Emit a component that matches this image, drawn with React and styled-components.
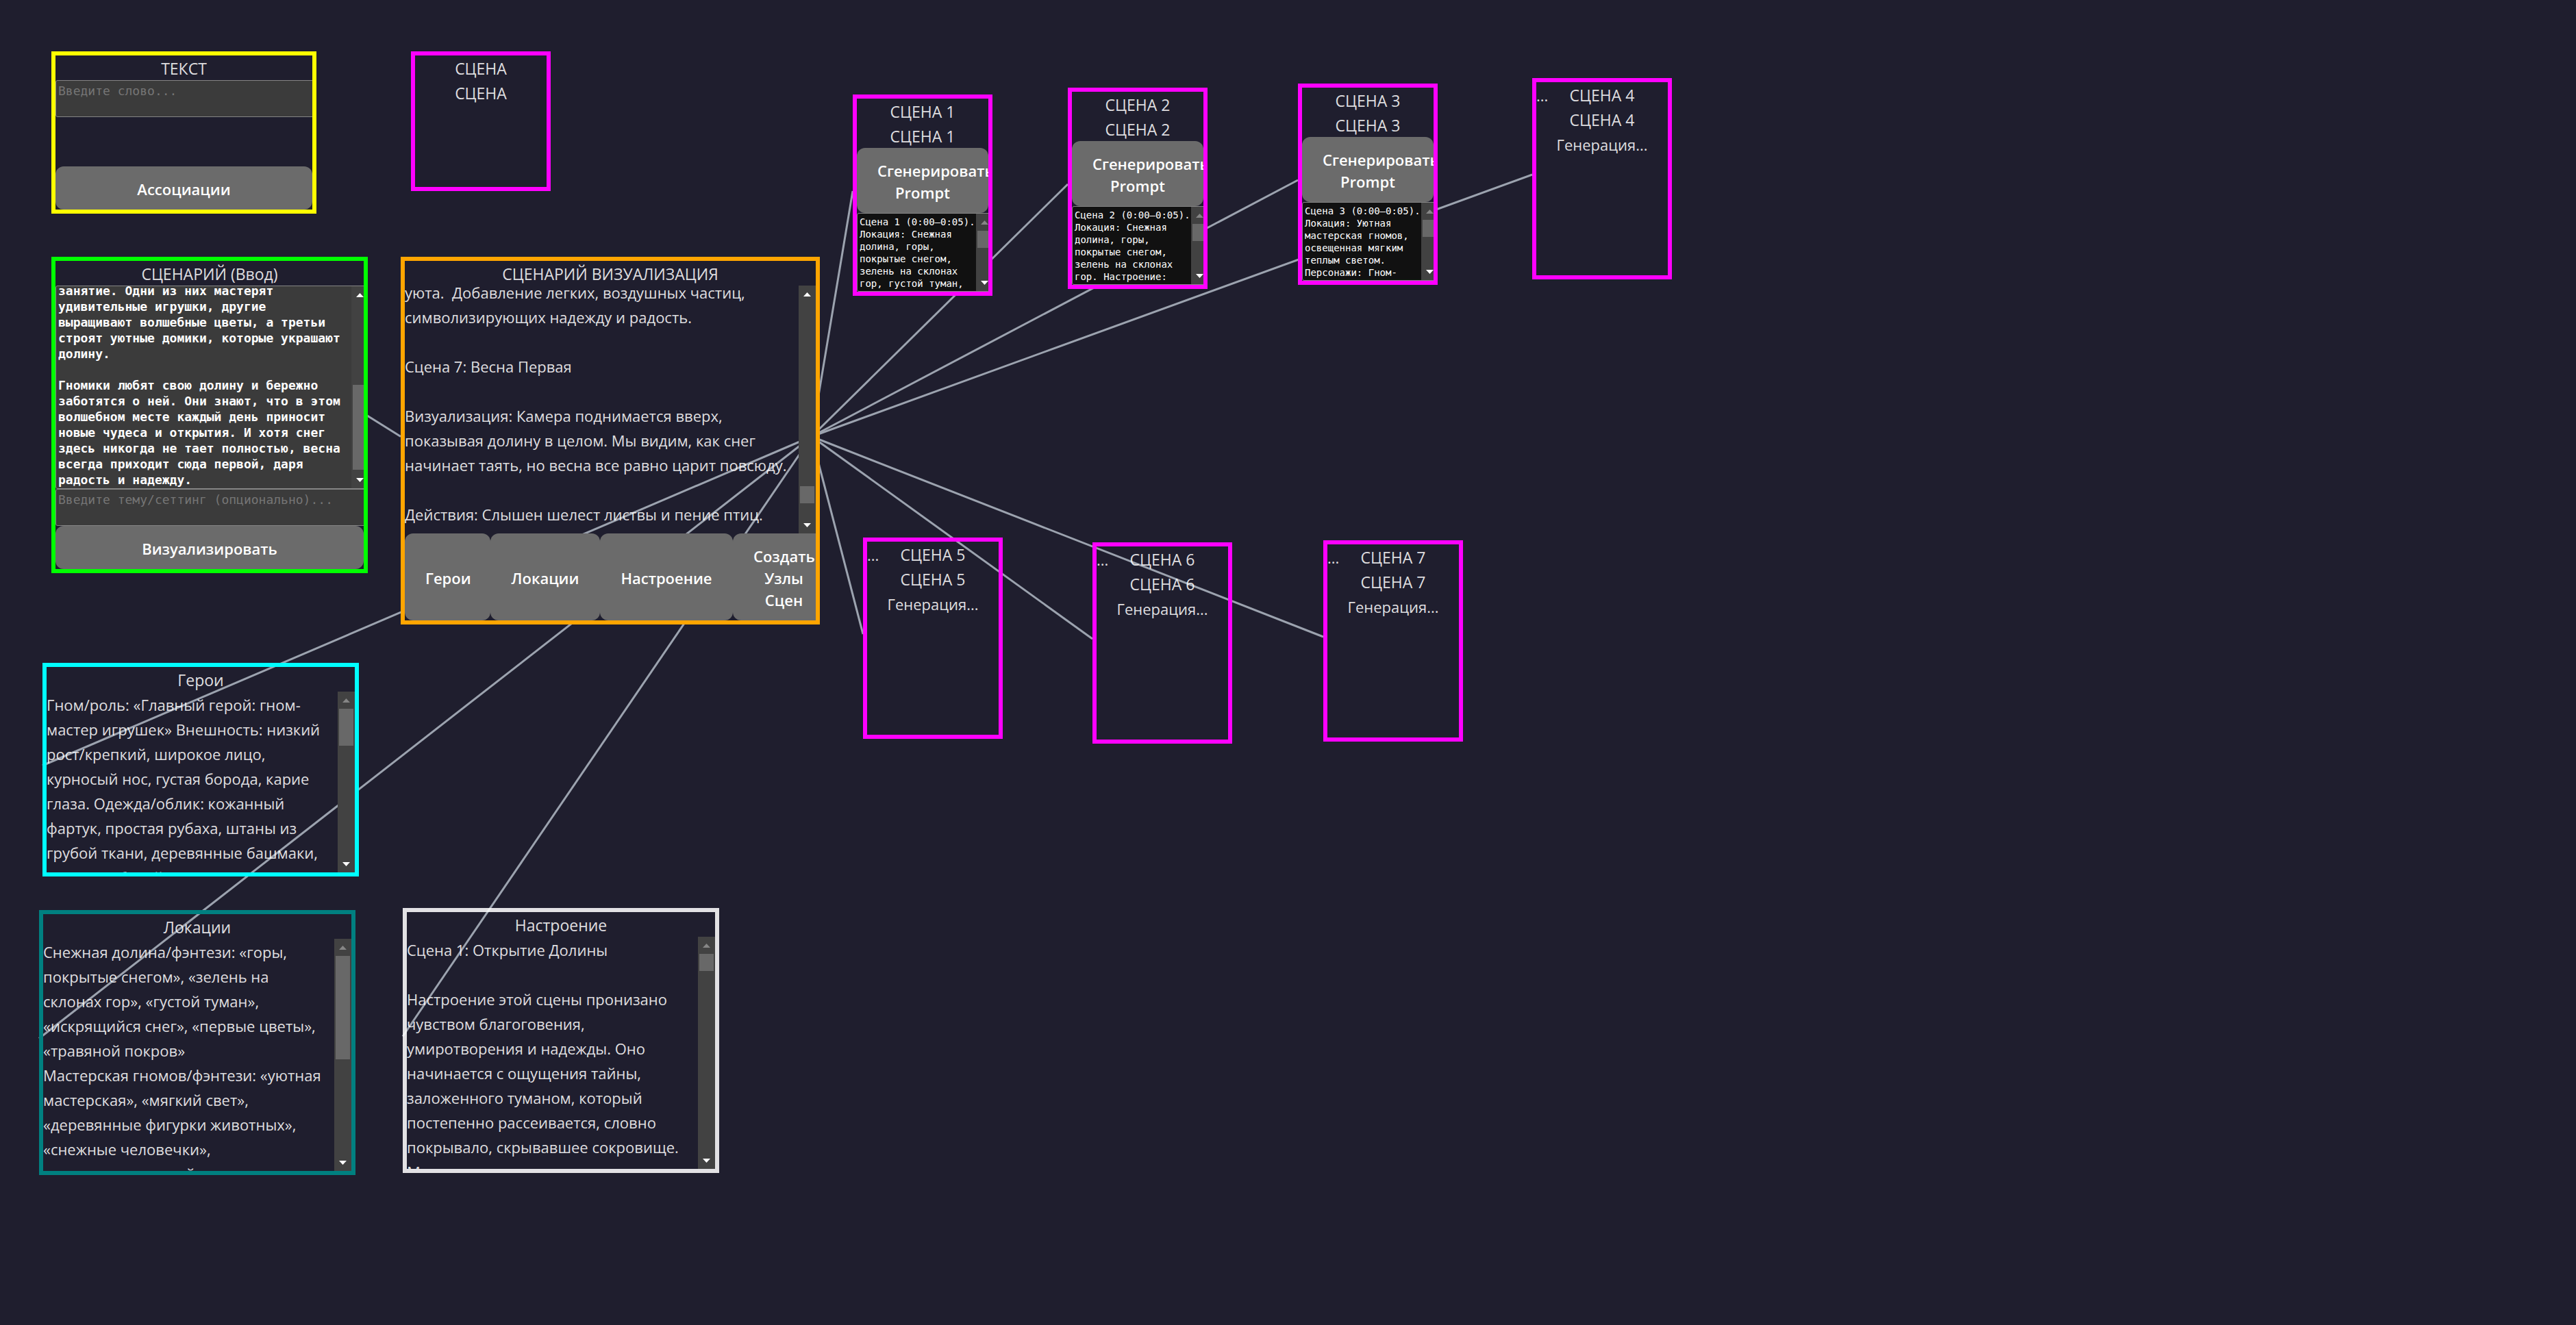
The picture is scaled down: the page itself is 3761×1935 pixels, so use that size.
import React, { useLayoutEffect, useRef } from "react";
import styled, { createGlobalStyle } from "styled-components";

const UI_FONT = '"Segoe UI", "Open Sans", "Noto Sans", sans-serif';
const MONO_FONT = 'Consolas, "DejaVu Sans Mono", monospace';
const INK = "rgba(255, 255, 255, 0.87)";

const GlobalStyle = createGlobalStyle`
  *, *::before, *::after { box-sizing: border-box; }
  body {
    margin: 0;
    background: #1f1e2e;
    color: ${INK};
    font: 400 22px/36px ${UI_FONT};
  }
`;

const Canvas = styled.main`
  position: relative;
  min-height: 100vh;
  overflow: hidden;
`;

const Links = styled.svg`
  position: absolute;
  inset: 0;
  width: 100%;
  height: 100%;
  stroke: #9ca3af;
  stroke-width: 3;
`;

const Node = styled.section`
  position: absolute;
  left: ${(p) => p.$x}px;
  top: ${(p) => p.$y}px;
  width: ${(p) => p.$w + 12}px;
  height: ${(p) => p.$h + 12}px;
  display: flex;
  flex-direction: column;
  overflow: hidden;
  border: 6px solid ${(p) => p.$color};
`;

const Title = styled.h2`
  margin: 0;
  padding-top: 1px;
  height: 36px;
  flex: none;
  font-size: 23px;
  font-weight: 400;
  text-align: center;
`;

const Line = styled(Title).attrs({ as: "p" })``;

const Status = styled(Line)`
  font-size: 22px;
`;

const Pending = styled.span`
  position: absolute;
  left: 0;
  top: 0;
  padding-top: 1px;
`;

const Button = styled.button`
  flex: none;
  padding: 17px 30px 14px;
  border: 0;
  border-radius: 12px;
  background: #6b6b6b;
  color: #fff;
  font: 600 22px/32px ${UI_FONT};
  text-align: center;
`;

const BottomButton = styled(Button)`
  margin-top: auto;
`;

const Actions = styled.div`
  display: grid;
  flex: none;
  grid-template-columns: 125px 160px 194px 149px;
`;

const Field = styled.div`
  display: flex;
  flex: ${(p) => (p.$grow ? "1 1 0" : "none")};
  min-height: 0;
  width: calc(100% + 8px);
  border: 1px solid #858585;
  border-radius: 3px;
  overflow: hidden;
  background: ${(p) => (p.$dark ? "#111" : "#3b3b3b")};
`;

const Input = styled.textarea`
  display: block;
  flex: 1;
  min-width: 0;
  padding: 3px;
  border: 0;
  outline: 0;
  resize: none;
  overflow: hidden;
  white-space: pre;
  background: transparent;
  color: #fff;
  font: 400 18px/23px ${MONO_FONT};
  &::placeholder { color: #757575; opacity: 1; }
`;

const ScriptInput = styled(Input)`
  padding-bottom: 1px;
  font-weight: 700;
`;

const PromptInput = styled(Input)`
  font-size: 14px;
  line-height: 18px;
`;

const Body = styled.div`
  display: flex;
  flex: 1 1 0;
  min-height: 0;
`;

const Copy = styled.div`
  flex: 1;
  min-width: 0;
  padding-top: 1px;
  overflow: hidden;
  white-space: pre;
`;

const Track = styled.div`
  display: flex;
  flex-direction: column;
  flex: none;
  width: 25px;
  background: #424242;
`;

const Arrow = styled.svg`
  flex: none;
  width: 25px;
  height: 25px;
  fill: ${(p) => (p.$muted ? "#868686" : "#fff")};
`;

const Rail = styled.div`
  flex: 1;
  min-height: 0;
  padding: 0 2px;
`;

const Thumb = styled.div`
  height: ${(p) => p.$size}px;
  margin-top: ${(p) => p.$offset}px;
  background: #686868;
`;

function Scrollbar({ size, offset = 0 }) {
  return (
    <Track aria-hidden="true">
      <Arrow $muted={offset === 0} viewBox="0 0 25 25"><path d="M7 16L12.500 10L18 16Z" /></Arrow>
      <Rail><Thumb $size={size} $offset={offset} /></Rail>
      <Arrow viewBox="0 0 25 25"><path d="M7 10L12.500 16L18 10Z" /></Arrow>
    </Track>
  );
}

function ScrollCopy({ text, scroll = 0, size, offset }) {
  const ref = useRef(null);
  useLayoutEffect(() => { ref.current.scrollTop = scroll; }, [scroll]);
  return (
    <Body>
      <Copy ref={ref}>{text}</Copy>
      <Scrollbar size={size} offset={offset} />
    </Body>
  );
}

function ScriptField({ label, text, size, offset }) {
  const ref = useRef(null);
  useLayoutEffect(() => { ref.current.scrollTop = ref.current.scrollHeight; }, []);
  return (
    <Field $grow>
      <ScriptInput ref={ref} aria-label={label} defaultValue={text} />
      <Scrollbar size={size} offset={offset} />
    </Field>
  );
}

function PromptField({ label, text }) {
  return (
    <Field $grow $dark>
      <PromptInput aria-label={label} defaultValue={text} />
      <Scrollbar size={25} />
    </Field>
  );
}

const SCRIPT = `У каждого гномика есть любимое
занятие. Одни из них мастерят
удивительные игрушки, другие
выращивают волшебные цветы, а третьи
строят уютные домики, которые украшают
долину.

Гномики любят свою долину и бережно
заботятся о ней. Они знают, что в этом
волшебном месте каждый день приносит
новые чудеса и открытия. И хотя снег
здесь никогда не тает полностью, весна
всегда приходит сюда первой, даря
радость и надежду.`;

const VISUAL = `уюта.  Добавление легких, воздушных частиц,
символизирующих надежду и радость.

Сцена 7: Весна Первая

Визуализация: Камера поднимается вверх,
показывая долину в целом. Мы видим, как снег
начинает таять, но весна все равно царит повсюду.

Действия: Слышен шелест листвы и пение птиц.

`;

const HEROES = `Гном/роль: «Главный герой: гном-
мастер игрушек» Внешность: низкий
рост/крепкий, широкое лицо,
курносый нос, густая борода, карие
глаза. Одежда/облик: кожанный
фартук, простая рубаха, штаны из
грубой ткани, деревянные башмаки,
шапка из белой`;

const PLACES = `Снежная долина/фэнтези: «горы,
покрытые снегом», «зелень на
склонах гор», «густой туман»,
«искрящийся снег», «первые цветы»,
«травяной покров»
Мастерская гномов/фэнтези: «уютная
мастерская», «мягкий свет»,
«деревянные фигурки животных»,
«снежные человечки»,
«стеллажи», «мягкий`;

const MOOD = `Сцена 1: Открытие Долины

Настроение этой сцены пронизано
чувством благоговения,
умиротворения и надежды. Оно
начинается с ощущения тайны,
заложенного туманом, который
постепенно рассеивается, словно
покрывало, скрывавшее сокровище.
Мы`;

const SCENES = [
  { n: 1, x: 1245, y: 138, text: "Сцена 1 (0:00–0:05).\nЛокация: Снежная\nдолина, горы,\nпокрытые снегом,\nзелень на склонах\nгор, густой туман," },
  { n: 2, x: 1559, y: 128, text: "Сцена 2 (0:00–0:05).\nЛокация: Снежная\nдолина, горы,\nпокрытые снегом,\nзелень на склонах\nгор. Настроение:" },
  { n: 3, x: 1895, y: 122, text: "Сцена 3 (0:00–0:05).\nЛокация: Уютная\nмастерская гномов,\nосвещенная мягким\nтеплым светом.\nПерсонажи: Гном-" },
  { n: 4, x: 2237, y: 114 },
  { n: 5, x: 1260, y: 785 },
  { n: 6, x: 1595, y: 792 },
  { n: 7, x: 1932, y: 789 },
];

const HUB = { x: 1185, y: 637.5 };
const TARGETS = [
  ...SCENES.map((s) => [s.x, s.y + 141]),
  [62, 1118],
  [57, 1516.5],
  [588, 1513.5],
];

function Scene({ n, x, y, text }) {
  return (
    <Node $x={x} $y={y} $w={192} $h={282} $color="#f0f">
      {!text && <Pending>...</Pending>}
      <Title>СЦЕНА {n}</Title>
      <Line>СЦЕНА {n}</Line>
      {text ? (
        <>
          <Button type="button">Сгенерировать Prompt</Button>
          <PromptField label={`Prompt ${n}`} text={text} />
        </>
      ) : (
        <Status>Генерация...</Status>
      )}
    </Node>
  );
}

export default function App() {
  return (
    <Canvas>
      <GlobalStyle />
      <Links aria-hidden="true">
        <line x1="525" y1="600" x2="585" y2="637.5" />
        {TARGETS.map(([x, y]) => (
          <line key={`${x}-${y}`} x1={HUB.x} y1={HUB.y} x2={x} y2={y} />
        ))}
      </Links>

      <Node $x={75} $y={75} $w={375} $h={225} $color="#ff0">
        <Title>ТЕКСТ</Title>
        <Field>
          <Input rows={2} aria-label="Слово" placeholder="Введите слово..." />
        </Field>
        <BottomButton type="button">Ассоциации</BottomButton>
      </Node>

      <Node $x={600} $y={75} $w={192} $h={192} $color="#f0f">
        <Title>СЦЕНА</Title>
        <Line>СЦЕНА</Line>
      </Node>

      <Node $x={75} $y={375} $w={450} $h={450} $color="#0f0">
        <Title>СЦЕНАРИЙ (Ввод)</Title>
        <ScriptField label="Сценарий" text={SCRIPT} size={124} offset={119} />
        <Field>
          <Input rows={2} aria-label="Тема" placeholder="Введите тему/сеттинг (опционально)..." />
        </Field>
        <Button type="button">Визуализировать</Button>
      </Node>

      <Node $x={585} $y={375} $w={600} $h={525} $color="orange">
        <Title>СЦЕНАРИЙ ВИЗУАЛИЗАЦИЯ</Title>
        <ScrollCopy text={VISUAL} scroll={9} size={25} offset={268} />
        <Actions>
          <Button type="button">Герои</Button>
          <Button type="button">Локации</Button>
          <Button type="button">Настроение</Button>
          <Button type="button">Создать Узлы Сцен</Button>
        </Actions>
      </Node>

      {SCENES.map((s) => <Scene key={s.n} {...s} />)}

      <Node $x={62} $y={968} $w={450} $h={300} $color="cyan">
        <Title>Герои</Title>
        <ScrollCopy text={HEROES} size={54} />
      </Node>

      <Node $x={57} $y={1329} $w={450} $h={375} $color="teal">
        <Title>Локации</Title>
        <ScrollCopy text={PLACES} size={151} />
      </Node>

      <Node $x={588} $y={1326} $w={450} $h={375} $color={INK}>
        <Title>Настроение</Title>
        <ScrollCopy text={MOOD} size={25} />
      </Node>
    </Canvas>
  );
}
